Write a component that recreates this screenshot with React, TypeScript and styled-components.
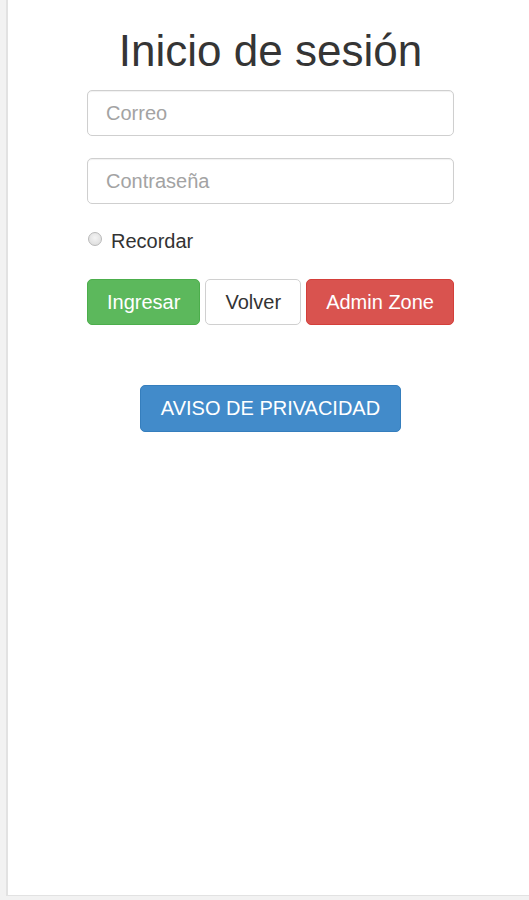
import React from 'react'
import styled, { createGlobalStyle } from 'styled-components'

const GlobalStyle = createGlobalStyle`
  html, body {
    margin: 0;
    padding: 0;
    background: #f2f2f2;
    font-family: "Liberation Sans", Arial, sans-serif;
  }
`

const Panel = styled.div`
  margin-left: 6px;
  height: 896px;
  background: #fff;
  border-left: 2px solid #e2e2e2;
  border-bottom: 1px solid #e2e2e2;
  box-sizing: border-box;
  overflow: hidden;
`

const Form = styled.form`
  width: 367px;
  margin-left: 79px;
  display: flex;
  flex-direction: column;
`

const Title = styled.h1`
  margin: 27px 0 16px;
  font-size: 44px;
  line-height: 47px;
  font-weight: 400;
  color: #353535;
  text-align: center;
  white-space: nowrap;
`

const Input = styled.input<{ $gap?: number }>`
  box-sizing: border-box;
  width: 100%;
  height: 46px;
  padding: 0 18px;
  border: 1px solid #cfcfcf;
  border-radius: 5px;
  box-shadow: inset 0 1px 1px rgba(0, 0, 0, 0.06);
  font-family: "Liberation Sans", Arial, sans-serif;
  font-size: 20px;
  color: #555;
  margin-bottom: ${p => p.$gap ?? 0}px;
  &::placeholder {
    color: #a3a3a3;
  }
`

const CheckRow = styled.label`
  display: flex;
  align-items: center;
  gap: 9px;
  margin: 26px 0 27px;
  height: 22px;
  font-size: 20px;
  color: #333;
`

const Radio = styled.input`
  appearance: none;
  margin: 0 0 0 1px;
  width: 14px;
  height: 14px;
  border-radius: 50%;
  border: 1px solid #b9b9b9;
  background: radial-gradient(circle at 50% 40%, #f4f4f4 0%, #d9d9d9 100%);
  box-sizing: border-box;
  position: relative;
  top: -2px;
`

const ButtonRow = styled.div`
  display: flex;
  justify-content: space-between;
`

const variants = {
  success: { bg: '#5cb85c', border: '#4cae4c', color: '#fff' },
  default: { bg: '#fff', border: '#d0d0d0', color: '#333' },
  danger: { bg: '#d9534f', border: '#d43f3a', color: '#fff' },
  primary: { bg: '#428bca', border: '#357ebd', color: '#fff' },
}

type Variant = keyof typeof variants

const Button = styled.button<{ $variant: Variant }>`
  height: 46px;
  padding: 0 19px;
  border-radius: 5px;
  border: 1px solid ${p => variants[p.$variant].border};
  background: ${p => variants[p.$variant].bg};
  color: ${p => variants[p.$variant].color};
  font-family: "Liberation Sans", Arial, sans-serif;
  font-size: 20px;
  cursor: pointer;
`

const Notice = styled(Button)`
  align-self: center;
  margin-top: 60px;
  height: 47px;
  padding: 0 20px;
`

const App = () => {
  return (
    <>
      <GlobalStyle />
      <Panel>
        <Form onSubmit={e => e.preventDefault()}>
          <Title>Inicio de sesión</Title>
          <Input type="email" placeholder="Correo" $gap={22} />
          <Input type="password" placeholder="Contraseña" />
          <CheckRow>
            <Radio type="radio" name="recordar" />
            Recordar
          </CheckRow>
          <ButtonRow>
            <Button type="submit" $variant="success">Ingresar</Button>
            <Button type="button" $variant="default">Volver</Button>
            <Button type="button" $variant="danger">Admin Zone</Button>
          </ButtonRow>
          <Notice type="button" $variant="primary">AVISO DE PRIVACIDAD</Notice>
        </Form>
      </Panel>
    </>
  )
}

export default App
